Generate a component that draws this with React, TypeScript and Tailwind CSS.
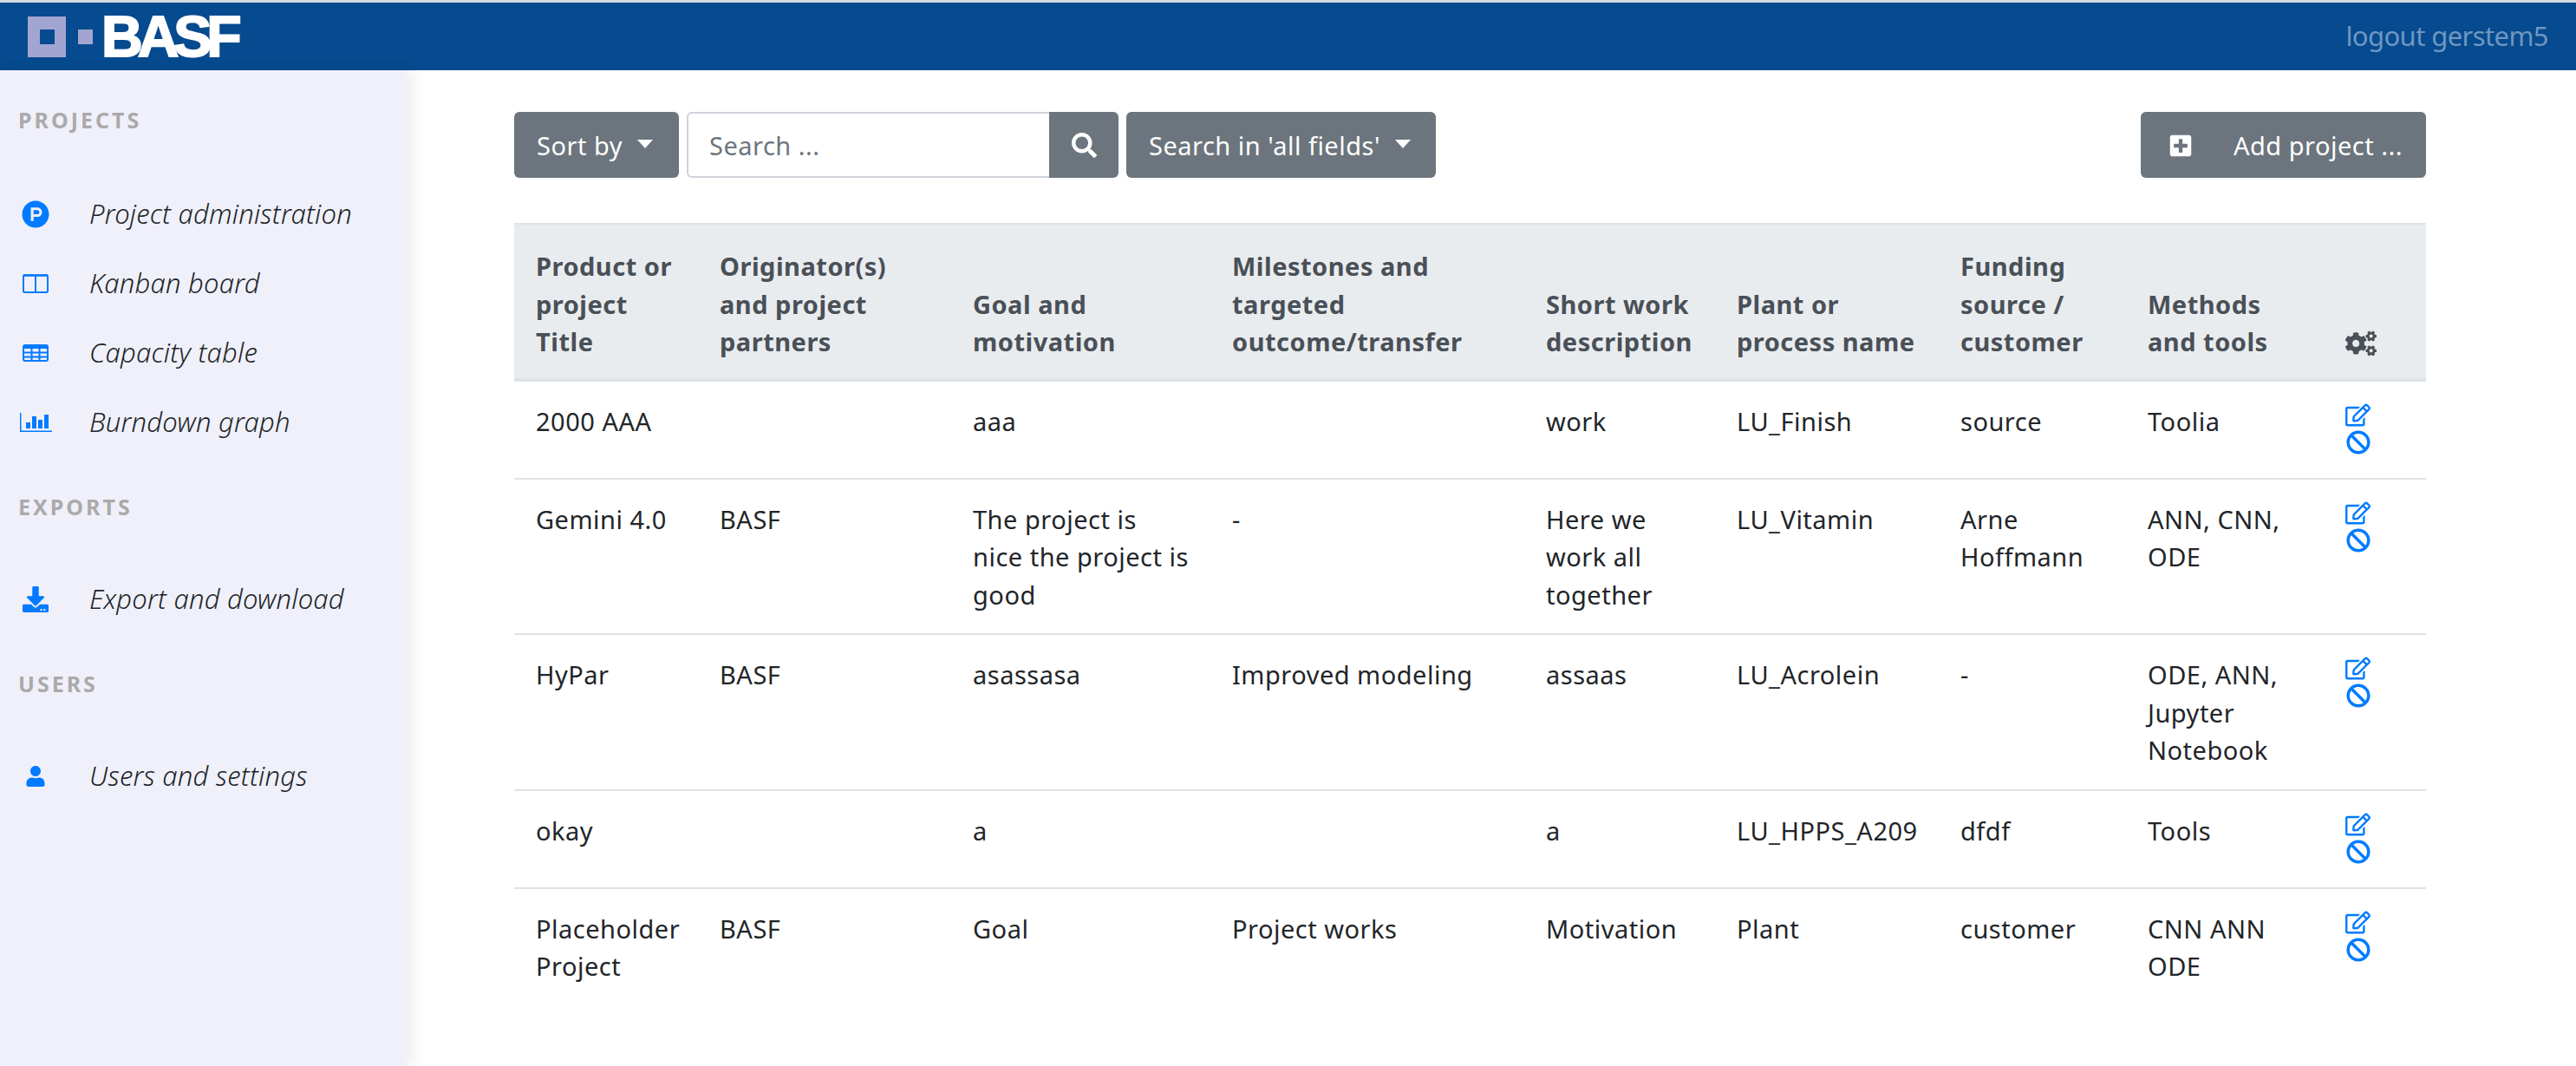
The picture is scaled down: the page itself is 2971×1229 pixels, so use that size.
import { FaProductHunt, FaDownload, FaUser, FaSearch, FaPlusSquare, FaCogs, FaRegEdit, FaBan } from 'react-icons/fa';
import type { ReactNode } from 'react';

const rows = [
  ['2000 AAA', '', 'aaa', '', 'work', 'LU_Finish', 'source', 'Toolia'],
  ['Gemini 4.0', 'BASF', 'The project is nice the project is good', '-', 'Here we work all together', 'LU_Vitamin', 'Arne Hoffmann', 'ANN, CNN, ODE'],
  ['HyPar', 'BASF', 'asassasa', 'Improved modeling', 'assaas', 'LU_Acrolein', '-', 'ODE, ANN, Jupyter Notebook'],
  ['okay', '', 'a', '', 'a', 'LU_HPPS_A209', 'dfdf', 'Tools'],
  ['Placeholder Project', 'BASF', 'Goal', 'Project works', 'Motivation', 'Plant', 'customer', 'CNN ANN ODE'],
];

const headers = [
  'Product or project Title',
  'Originator(s) and project partners',
  'Goal and motivation',
  'Milestones and targeted outcome/transfer',
  'Short work description',
  'Plant or process name',
  'Funding source / customer',
  'Methods and tools',
];

function KanbanIcon() {
  return (
    <svg width="30" height="22" viewBox="0 0 30 22" fill="none" stroke="#007bff" strokeWidth="2">
      <rect x="1" y="1.25" width="28" height="19.75" rx="1.5" />
      <path d="M15 1v20" />
      <path d="M1 1.5h28" strokeWidth="2.5" />
    </svg>
  );
}

function CapacityIcon() {
  return (
    <svg width="30" height="20" viewBox="0 0 30 20" fill="none" stroke="#007bff" strokeWidth="2">
      <rect x="1" y="1" width="28" height="18" rx="2" />
      <path d="M1 3h28" strokeWidth="4" />
      <path d="M1 9.5h28M1 14.5h28M10.5 4v15M19.5 4v15" />
    </svg>
  );
}

function BurndownIcon() {
  return (
    <svg width="37" height="22" viewBox="0 0 37 22" fill="#007bff">
      <rect x="0" y="0" width="1.5" height="22" />
      <rect x="0" y="20.5" width="37" height="1.5" />
      <rect x="7" y="11" width="5" height="7" />
      <rect x="14" y="4" width="5" height="14" />
      <rect x="21" y="8" width="5" height="10" />
      <rect x="28" y="2" width="5" height="16" />
    </svg>
  );
}

function SideLabel({ children, className }: { children: ReactNode; className: string }) {
  return <div className={`pl-[21px] text-[25px] leading-[37px] font-bold tracking-[3px] text-[#aaaaaa] ${className}`}>{children}</div>;
}

function SideItem({ icon, label }: { icon: ReactNode; label: string }) {
  return (
    <div className="flex h-[80px] items-center text-[#212529] italic">
      <div className="flex w-[103px] shrink-0 justify-center pr-[21px] text-[#007bff]">{icon}</div>
      <span className="text-[31px] font-light tracking-[0.2px]">{label}</span>
    </div>
  );
}

function Caret() {
  return <span className="mb-[4px] ml-[17px] h-0 w-0 border-x-[9px] border-t-[10px] border-x-transparent border-t-white" />;
}

export default function App() {
  return (
    <div className="min-h-screen bg-white font-['Noto_Sans','Open_Sans',sans-serif] text-[29px] leading-[43.5px] tracking-[0.5px] text-[#212529]">
      <header className="flex h-[81px] items-center justify-between border-t-[3px] border-[#d5dbe0] bg-[#064a8f] pr-[32px] pl-[32px]">
        <div className="flex items-center">
          <div className="flex h-[47px] w-[44px] items-center justify-center bg-[#a2a5d1]">
            <div className="h-[17px] w-[17px] bg-[#064a8f]" />
          </div>
          <div className="ml-[14px] h-[17px] w-[17px] bg-[#a2a5d1]" />
          <span className="ml-[10px] font-['Liberation_Sans',sans-serif] text-[66px] leading-[48px] font-bold tracking-[-6px] text-white [-webkit-text-stroke:2px_white]">BASF</span>
        </div>
        <span className="text-[31px] tracking-[-0.6px] text-[#6f97c0]">logout gerstem5</span>
      </header>

      <div className="flex min-h-[1148px]">
        <aside className="w-[468px] shrink-0 bg-[#f0f0fa] pt-[39px] shadow-[8px_0_16px_rgba(0,0,0,0.08)]">
          <SideLabel className="mb-[50px]">PROJECTS</SideLabel>
          <SideItem icon={<FaProductHunt size={32} />} label="Project administration" />
          <SideItem icon={<KanbanIcon />} label="Kanban board" />
          <SideItem icon={<CapacityIcon />} label="Capacity table" />
          <SideItem icon={<BurndownIcon />} label="Burndown graph" />
          <SideLabel className="mt-[39px] mb-[48px]">EXPORTS</SideLabel>
          <SideItem icon={<FaDownload size={30} />} label="Export and download" />
          <SideLabel className="mt-[39px] mb-[48px]">USERS</SideLabel>
          <SideItem icon={<FaUser size={24} />} label="Users and settings" />
        </aside>

        <main className="flex-1 pt-[48px] pr-[173px] pl-[125px]">
          <div className="flex h-[76px] items-stretch">
            <button className="flex w-[190px] items-center rounded-[6px] bg-[#6c757d] pt-[2px] pl-[26px] text-white">
              Sort by
              <Caret />
            </button>
            <div className="ml-[9px] flex w-[498px]">
              <div className="flex flex-1 items-center rounded-l-[6px] border-2 border-r-0 border-[#ced4da] pt-[2px] pl-[24px] text-[#6c757d]">Search ...</div>
              <div className="flex w-[80px] items-center justify-center rounded-r-[6px] bg-[#6c757d] text-white">
                <FaSearch size={29} />
              </div>
            </div>
            <button className="ml-[9px] flex w-[357px] items-center rounded-[6px] bg-[#6c757d] pt-[2px] pl-[26px] text-white">
              Search in 'all fields'
              <Caret />
            </button>
            <button className="ml-auto flex w-[329px] items-center rounded-[6px] bg-[#6c757d] pt-[2px] pl-[32px] text-white">
              <FaPlusSquare size={28} />
              <span className="ml-[47px]">Add project ...</span>
            </button>
          </div>

          <table className="mt-[52px] w-[2205px] table-fixed border-collapse">
            <colgroup>
              <col className="w-[212px]" />
              <col className="w-[292px]" />
              <col className="w-[299px]" />
              <col className="w-[362px]" />
              <col className="w-[220px]" />
              <col className="w-[258px]" />
              <col className="w-[216px]" />
              <col className="w-[228px]" />
              <col className="w-[118px]" />
            </colgroup>
            <thead className="bg-[#e9ecef] text-[#495057]">
              <tr className="border-t-[2px] border-b-[4px] border-[#dee2e6]">
                {headers.map((h) => (
                  <th key={h} className="px-[25px] pt-[26px] pb-[20px] text-left align-bottom font-bold">{h}</th>
                ))}
                <th className="px-[25px] pt-[26px] pb-[20px] text-left align-bottom">
                  <FaCogs size={36} className="mb-[2px]" />
                </th>
              </tr>
            </thead>
            <tbody>
              {rows.map((row) => (
                <tr key={row[0]} className="border-b-[2px] border-[#dee2e6] last:border-b-0">
                  {row.map((cell, i) => (
                    <td key={i} className="px-[25px] pt-[24px] pb-[23px] align-top">{cell}</td>
                  ))}
                  <td className="px-[25px] pt-[24px] pb-[27px] align-top">
                    <div className="flex w-fit flex-col items-center gap-[3px] text-[#007bff]">
                      <FaRegEdit size={29} />
                      <FaBan size={28} />
                    </div>
                  </td>
                </tr>
              ))}
            </tbody>
          </table>
        </main>
      </div>
    </div>
  );
}
